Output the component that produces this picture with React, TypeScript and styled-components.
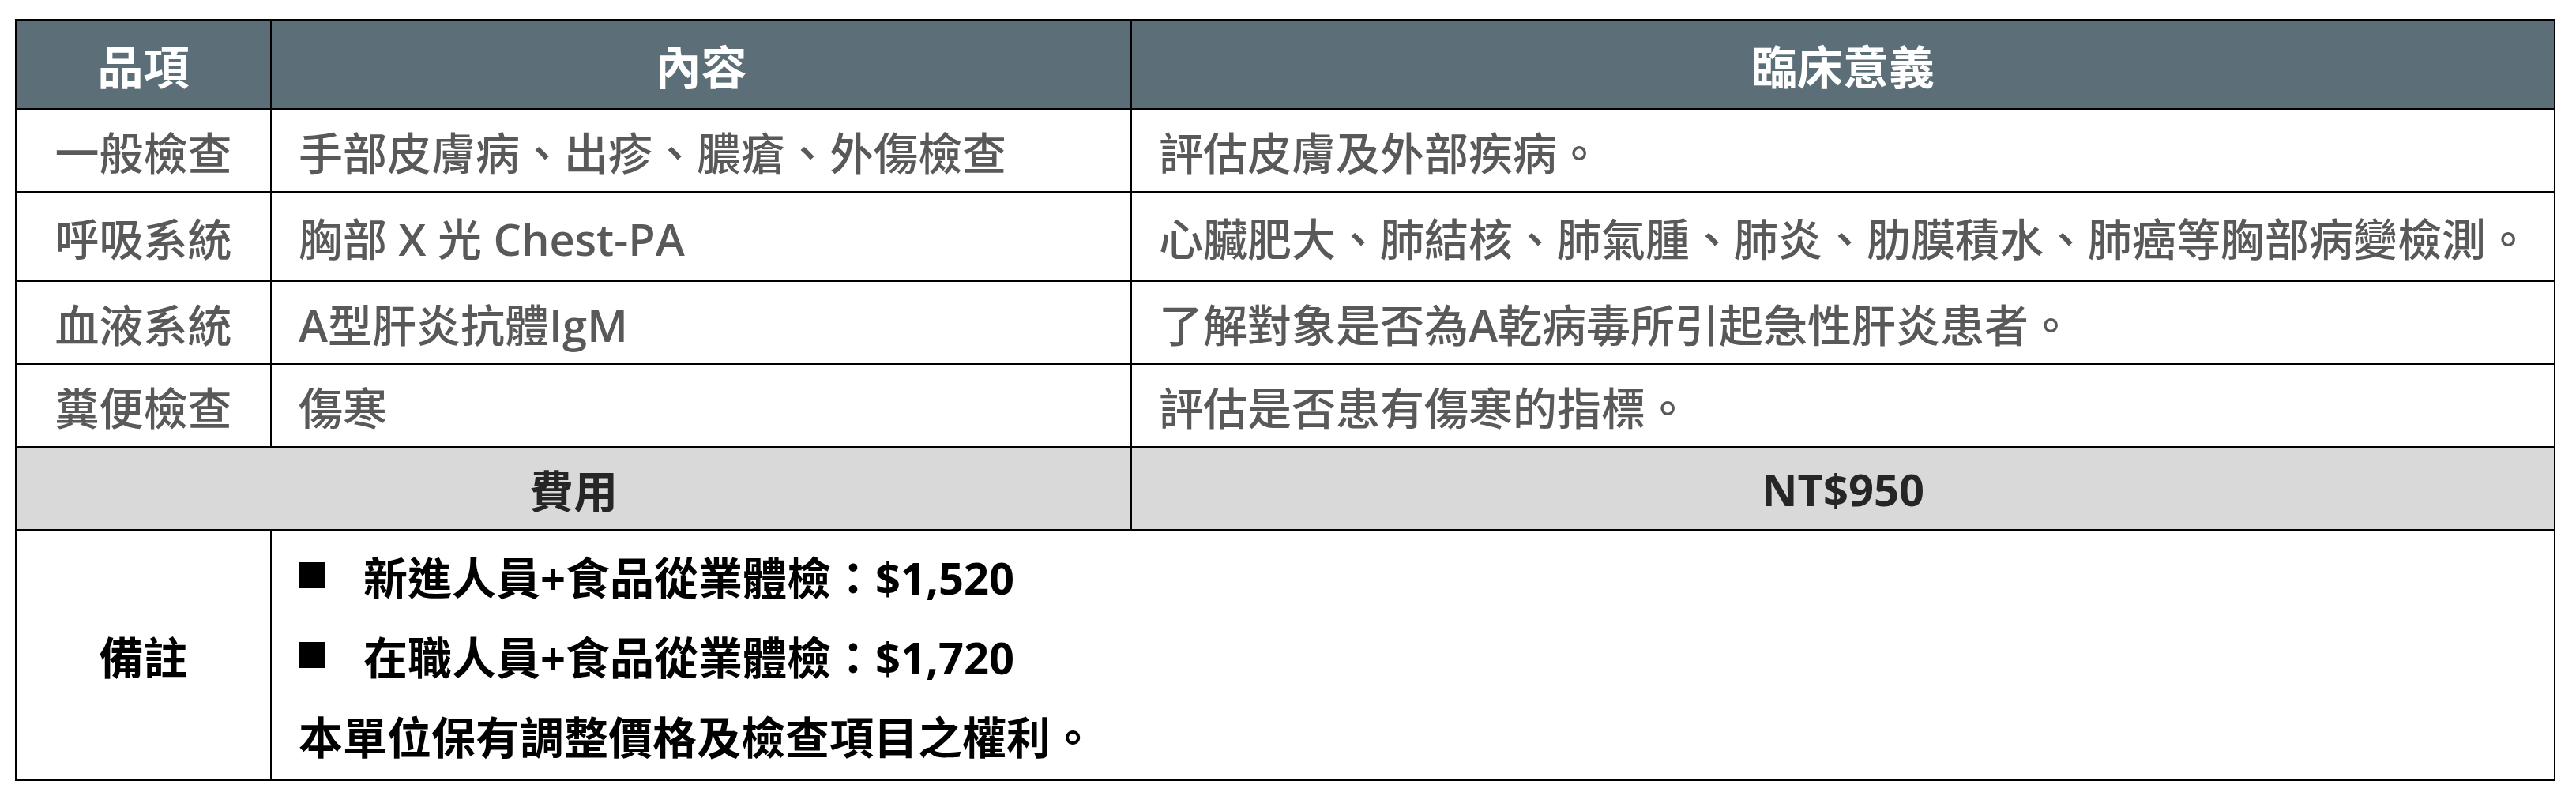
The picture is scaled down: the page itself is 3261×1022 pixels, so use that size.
import React from 'react'
import styled, { createGlobalStyle } from 'styled-components'

const GlobalStyle = createGlobalStyle`
  html, body {
    margin: 0;
    padding: 0;
    background: #ffffff;
  }
  body {
    font-family: "Open Sans", "Noto Sans CJK TC", sans-serif;
  }
`

const Page = styled.div`
  padding: 24px 0 0 19px;
`

const Table = styled.table`
  width: 3214px;
  border-collapse: collapse;
  table-layout: fixed;
  font-family: "Open Sans", "Noto Sans CJK TC", sans-serif;
  font-size: 56px;
  color: #595959;
`

const Col = styled.col<{ $width: number }>`
  width: ${(p) => p.$width}px;
`

const Row = styled.tr<{ $height: number }>`
  height: ${(p) => p.$height}px;
`

const HeadCell = styled.th`
  background: #5c6f78;
  color: #ffffff;
  font-weight: 700;
  font-size: 58px;
  text-align: center;
  border: 2px solid #000;
  padding: 0;
`

const Cell = styled.td<{ $align?: 'left' | 'center' }>`
  border: 2px solid #000;
  text-align: ${(p) => p.$align ?? 'left'};
  padding: 0 ${(p) => (p.$align === 'center' ? 0 : 34)}px;
  vertical-align: middle;
  font-weight: 500;
  white-space: nowrap;
`

// latin runs in the reference are a touch heavier than the CJK text
const Latin = styled.span`
  font-weight: 600;
`

const FeeCell = styled.td`
  border: 2px solid #000;
  background: #d9d9d9;
  color: #262626;
  font-weight: 700;
  text-align: center;
  padding: 0;
`

const NoteLabel = styled.td`
  border: 2px solid #000;
  color: #000;
  font-weight: 700;
  text-align: center;
  padding: 0;
`

const NoteBody = styled.td`
  border: 2px solid #000;
  color: #000;
  font-weight: 700;
  padding: 6px 34px;
`

const NoteLine = styled.div`
  display: flex;
  align-items: center;
  height: 101px;
  white-space: nowrap;
`

const Bullet = styled.span`
  display: inline-block;
  width: 34px;
  height: 33px;
  background: #000;
  margin-right: 48px;
  flex: none;
`

type Item = {
  name: string
  content: React.ReactNode
  meaning: React.ReactNode
  height: number
}

const items: Item[] = [
  {
    name: '一般檢查',
    content: '手部皮膚病、出疹、膿瘡、外傷檢查',
    meaning: '評估皮膚及外部疾病。',
    height: 105,
  },
  {
    name: '呼吸系統',
    content: (
      <>
        胸部 <Latin>X</Latin> 光 <Latin>Chest-PA</Latin>
      </>
    ),
    meaning: '心臟肥大、肺結核、肺氣腫、肺炎、肋膜積水、肺癌等胸部病變檢測。',
    height: 113,
  },
  {
    name: '血液系統',
    content: (
      <>
        <Latin>A</Latin>型肝炎抗體<Latin>IgM</Latin>
      </>
    ),
    meaning: (
      <>
        了解對象是否為<Latin>A</Latin>乾病毒所引起急性肝炎患者。
      </>
    ),
    height: 105,
  },
  {
    name: '糞便檢查',
    content: '傷寒',
    meaning: '評估是否患有傷寒的指標。',
    height: 105,
  },
]

export default function App() {
  return (
    <>
      <GlobalStyle />
      <Page>
        <Table>
          <colgroup>
            <Col $width={323} />
            <Col $width={1089} />
            <Col $width={1802} />
          </colgroup>
          <thead>
            <Row $height={113}>
              <HeadCell>品項</HeadCell>
              <HeadCell>內容</HeadCell>
              <HeadCell>臨床意義</HeadCell>
            </Row>
          </thead>
          <tbody>
            {items.map((item) => (
              <Row key={item.name} $height={item.height}>
                <Cell $align="center">{item.name}</Cell>
                <Cell>{item.content}</Cell>
                <Cell>{item.meaning}</Cell>
              </Row>
            ))}
            <Row $height={105}>
              <FeeCell colSpan={2}>費用</FeeCell>
              <FeeCell>NT$950</FeeCell>
            </Row>
            <Row $height={316}>
              <NoteLabel>備註</NoteLabel>
              <NoteBody colSpan={2}>
                <NoteLine>
                  <Bullet />
                  新進人員+食品從業體檢：$1,520
                </NoteLine>
                <NoteLine>
                  <Bullet />
                  在職人員+食品從業體檢：$1,720
                </NoteLine>
                <NoteLine>本單位保有調整價格及檢查項目之權利。</NoteLine>
              </NoteBody>
            </Row>
          </tbody>
        </Table>
      </Page>
    </>
  )
}
